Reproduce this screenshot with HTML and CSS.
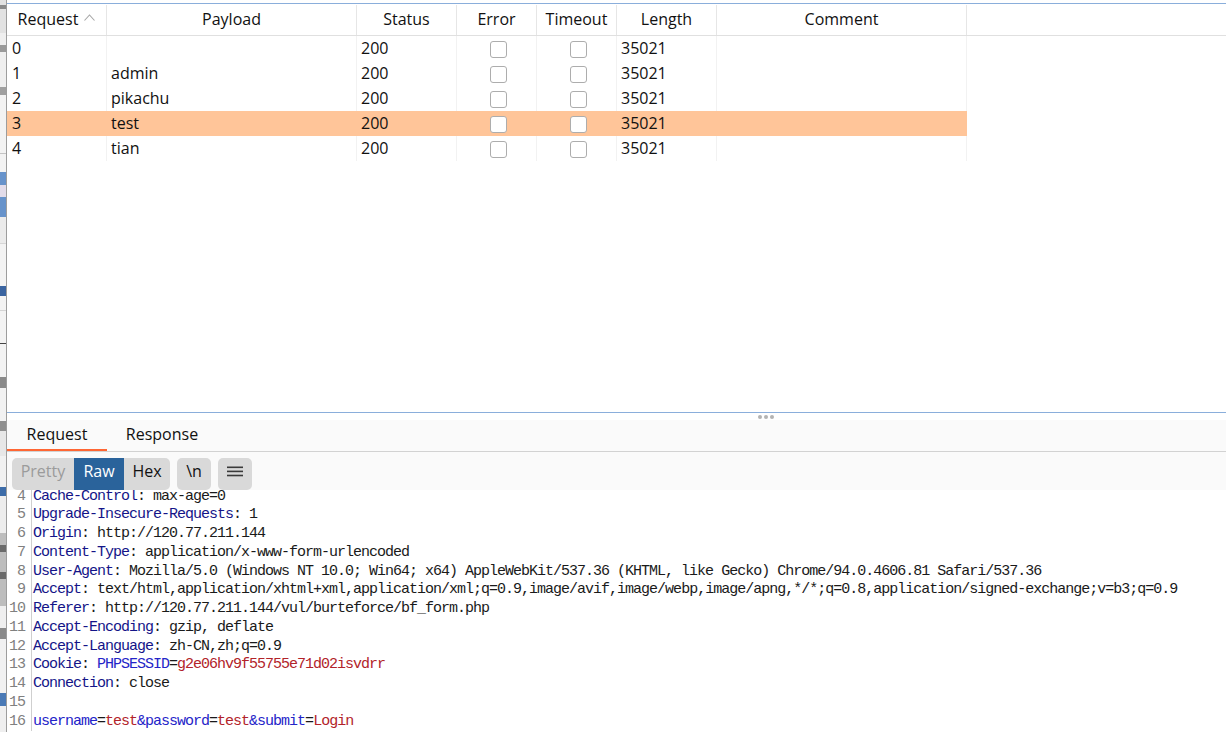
FILE: index.html
```html
<!DOCTYPE html>
<html lang="en">
<head>
<meta charset="utf-8">
<title>Intruder results</title>
<link rel="stylesheet" href="styles.css">
</head>
<body>
<div class="app">
  <div class="bgwin"></div>
  <div class="main">
    <div class="top-gap"></div>
    <section class="results">
      <div class="thead">
        <div class="th">Request<svg class="sort" width="11" height="7" viewBox="0 0 11 7"><polyline points="0.5,6.5 5.5,1 10.5,6.5" fill="none" stroke="#a6a6a6" stroke-width="1.1"/></svg></div>
        <div class="th">Payload</div>
        <div class="th">Status</div>
        <div class="th">Error</div>
        <div class="th">Timeout</div>
        <div class="th">Length</div>
        <div class="th">Comment</div>
        <div class="th th-fill"></div>
      </div>
      <div class="tbody">
        <div class="tr">
          <div class="td td-first">0</div><div class="td"></div><div class="td">200</div>
          <div class="td td-check"><span class="cb"></span></div><div class="td td-check"><span class="cb"></span></div>
          <div class="td">35021</div><div class="td"></div>
        </div>
        <div class="tr">
          <div class="td td-first">1</div><div class="td">admin</div><div class="td">200</div>
          <div class="td td-check"><span class="cb"></span></div><div class="td td-check"><span class="cb"></span></div>
          <div class="td">35021</div><div class="td"></div>
        </div>
        <div class="tr">
          <div class="td td-first">2</div><div class="td">pikachu</div><div class="td">200</div>
          <div class="td td-check"><span class="cb"></span></div><div class="td td-check"><span class="cb"></span></div>
          <div class="td">35021</div><div class="td"></div>
        </div>
        <div class="tr tr-hl">
          <div class="td td-first">3</div><div class="td">test</div><div class="td">200</div>
          <div class="td td-check"><span class="cb"></span></div><div class="td td-check"><span class="cb"></span></div>
          <div class="td">35021</div><div class="td"></div>
        </div>
        <div class="tr">
          <div class="td td-first">4</div><div class="td">tian</div><div class="td">200</div>
          <div class="td td-check"><span class="cb"></span></div><div class="td td-check"><span class="cb"></span></div>
          <div class="td">35021</div><div class="td"></div>
        </div>
      </div>
    </section>
    <div class="splitter"><span class="dot"></span><span class="dot"></span><span class="dot"></span></div>
    <nav class="tabs">
      <div class="tab tab-active">Request</div>
      <div class="tab tab-wide">Response</div>
    </nav>
    <div class="toolbar">
      <div class="seg">
        <span class="seg-btn seg-pretty">Pretty</span>
        <span class="seg-btn seg-raw">Raw</span>
        <span class="seg-btn seg-hex">Hex</span>
      </div>
      <span class="tbtn">\n</span>
      <span class="tbtn"><svg width="16" height="11" viewBox="0 0 16 11"><rect x="0" y="0.5" width="16" height="1.6" fill="#3a3a3a"/><rect x="0" y="4.6" width="16" height="1.6" fill="#3a3a3a"/><rect x="0" y="8.7" width="16" height="1.6" fill="#3a3a3a"/></svg></span>
    </div>
    <div class="editor">
      <div class="lines">
        <div class="line"><span class="ln">4</span><span class="tx"><span class="hn">Cache-Control</span>: max-age=0</span></div>
        <div class="line"><span class="ln">5</span><span class="tx"><span class="hn">Upgrade-Insecure-Requests</span>: 1</span></div>
        <div class="line"><span class="ln">6</span><span class="tx"><span class="hn">Origin</span>: http://120.77.211.144</span></div>
        <div class="line"><span class="ln">7</span><span class="tx"><span class="hn">Content-Type</span>: application/x-www-form-urlencoded</span></div>
        <div class="line"><span class="ln">8</span><span class="tx"><span class="hn">User-Agent</span>: Mozilla/5.0 (Windows NT 10.0; Win64; x64) AppleWebKit/537.36 (KHTML, like Gecko) Chrome/94.0.4606.81 Safari/537.36</span></div>
        <div class="line"><span class="ln">9</span><span class="tx"><span class="hn">Accept</span>: text/html,application/xhtml+xml,application/xml;q=0.9,image/avif,image/webp,image/apng,*/*;q=0.8,application/signed-exchange;v=b3;q=0.9</span></div>
        <div class="line"><span class="ln">10</span><span class="tx"><span class="hn">Referer</span>: http://120.77.211.144/vul/burteforce/bf_form.php</span></div>
        <div class="line"><span class="ln">11</span><span class="tx"><span class="hn">Accept-Encoding</span>: gzip, deflate</span></div>
        <div class="line"><span class="ln">12</span><span class="tx"><span class="hn">Accept-Language</span>: zh-CN,zh;q=0.9</span></div>
        <div class="line"><span class="ln">13</span><span class="tx"><span class="hn">Cookie</span>: <span class="pn">PHPSESSID</span>=<span class="pv">g2e06hv9f55755e71d02isvdrr</span></span></div>
        <div class="line"><span class="ln">14</span><span class="tx"><span class="hn">Connection</span>: close</span></div>
        <div class="line"><span class="ln">15</span><span class="tx"></span></div>
        <div class="line"><span class="ln">16</span><span class="tx"><span class="pn">username</span>=<span class="pv">test</span><span class="pn">&amp;password</span>=<span class="pv">test</span><span class="pn">&amp;submit</span>=<span class="pv">Login</span></span></div>
      </div>
    </div>
  </div>
</div>
</body>
</html>
```

FILE: styles.css
```css
* { box-sizing: border-box; }

html, body {
  margin: 0;
  padding: 0;
  width: 1226px;
  height: 732px;
  overflow: hidden;
  background: #ffffff;
}

body {
  font-family: "Open Sans", "Noto Sans", sans-serif;
  font-size: 16px;
  color: #111111;
}

.app {
  display: flex;
  width: 1226px;
  height: 732px;
}

/* sliver of a window behind */
.bgwin {
  flex: 0 0 7px;
  border-right: 1px solid #9d9d9d;
  background: linear-gradient(to bottom,
    #e2e2e2 0 5px, #8a8a8a 5px 9px, #e2e2e2 9px 33px,
    #efefef 33px 45px, #9a9a9a 45px 52px, #efefef 52px 87px,
    #a0a0a0 87px 95px, #f3f3f3 95px 153px, #c4c4c4 153px 154px,
    #f3f3f3 154px 172px, #6793cb 172px 185px, #e2dcea 185px 197px,
    #6793cb 197px 217px, #ebebeb 217px 243px, #d6d6d6 243px 244px,
    #f3f3f3 244px 286px, #3a64a0 286px 296px, #f3f3f3 296px 310px,
    #d4d4d4 310px 311px, #f3f3f3 311px 343px, #444444 343px 344px,
    #f3f3f3 344px 377px, #8a8a8a 377px 388px, #f2f2f2 388px 421px,
    #8f8f8f 421px 431px, #e7e7e7 431px 456px, #f1f1f1 456px 487px,
    #3d6ca8 487px 496px, #ededed 496px 533px, #bdbdbd 533px 545px,
    #6a6a6a 545px 552px, #bdbdbd 552px 572px, #6a6a6a 572px 579px,
    #bdbdbd 579px 606px, #efefef 606px 628px, #8a8a8a 628px 639px,
    #f1f1f1 639px 693px, #4a7ab6 693px 706px, #efefef 706px 732px);
}

.main {
  flex: 1 1 auto;
  min-width: 0;
  display: flex;
  flex-direction: column;
}

.top-gap { height: 3px; flex: 0 0 3px; }

/* results table */
.results {
  flex: 0 0 410px;
  border-top: 1px solid #8aaedb;
  border-bottom: 1px solid #8aaedb;
}

.thead {
  display: grid;
  grid-template-columns: 100px 250px 100px 80px 80px 100px 250px 1fr;
  height: 32px;
  border-bottom: 1px solid #e0e0e0;
}

.th {
  display: flex;
  align-items: center;
  justify-content: center;
  border-right: 1px solid #e6e6e6;
  margin-top: 1px;
  line-height: 1;
  color: #111111;
  padding-bottom: 3px;
}

.th-fill { border-right: none; }

.sort { margin-left: 6px; margin-top: -2px; }

.tr {
  display: grid;
  grid-template-columns: 100px 250px 100px 80px 80px 100px 250px;
  width: 960px;
  height: 25px;
}

.tr-hl { background: #ffc599; }

.td {
  display: flex;
  align-items: center;
  padding-left: 4px;
  padding-bottom: 1px;
  border-right: 1px solid #f2f2f2;
  white-space: nowrap;
  line-height: 1;
}

.tr-hl .td { border-right-color: #ffc599; }

.td-first { padding-left: 5px; }

.td-check {
  justify-content: center;
  padding-left: 3px;
  padding-bottom: 0;
}

.cb {
  width: 17px;
  height: 17px;
  border: 1px solid #adadad;
  border-radius: 3px;
  background: #ffffff;
  margin-top: 1px;
}

/* splitter */
.splitter {
  flex: 0 0 7px;
  display: flex;
  align-items: center;
  gap: 2px;
  padding-left: 751px;
  background: #ffffff;
}

.dot {
  width: 4px;
  height: 4px;
  border-radius: 50%;
  background: #b3b3b3;
}

/* tabs */
.tabs {
  flex: 0 0 32px;
  display: flex;
  background: #fafafa;
  border-bottom: 1px solid #d2d2d2;
}

.tab {
  width: 100px;
  height: 31px;
  display: flex;
  align-items: center;
  justify-content: center;
  padding-bottom: 3px;
  color: #111111;
}

.tab-wide { width: 110px; }

.tab-active { box-shadow: inset 0 -2px 0 #ff6633; }

/* toolbar */
.toolbar {
  flex: 0 0 38px;
  display: flex;
  align-items: flex-start;
  gap: 7px;
  padding: 6px 0 0 5px;
  background: #fafafa;
  overflow: hidden;
}

.seg {
  display: flex;
  height: 32px;
  border-radius: 5px;
  overflow: hidden;
  background: #d9d9d9;
}

.seg-btn {
  display: flex;
  justify-content: center;
  height: 32px;
  line-height: 27px;
  color: #111111;
}

.seg-pretty { width: 62px; color: #9b9b9b; }
.seg-raw { width: 50px; background: #2a639b; color: #ffffff; }
.seg-hex { width: 46px; }

.tbtn {
  width: 34px;
  height: 32px;
  border-radius: 5px;
  background: #d9d9d9;
  display: flex;
  justify-content: center;
  align-items: flex-start;
  line-height: 27px;
  color: #111111;
}

.tbtn svg { margin-top: 8px; }

/* editor */
.editor {
  flex: 1 1 auto;
  background: #ffffff;
  overflow: hidden;
  font-family: "Liberation Mono", "DejaVu Sans Mono", monospace;
  font-size: 15px;
  letter-spacing: -1px;
  line-height: 18.75px;
  color: #1a1a1a;
}

.lines { margin-top: -2.5px; }

.line {
  display: flex;
  height: 18.75px;
  white-space: pre;
}

.ln {
  flex: 0 0 25px;
  text-align: right;
  padding-right: 6px;
  border-right: 1px solid #cfcfcf;
  color: #808080;
}

.tx { padding-left: 1px; }

.hn { color: #141488; }
.pn { color: #2424c8; }
.pv { color: #b2232a; }
```
